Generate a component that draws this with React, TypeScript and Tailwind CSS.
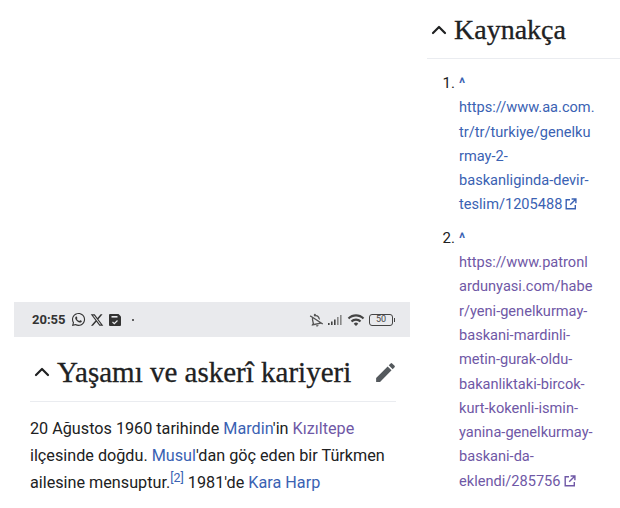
import { ChevronUp } from "lucide-react";
import { FaWhatsapp } from "react-icons/fa";
import { FaXTwitter } from "react-icons/fa6";
import { MdEdit, MdOutlineNotificationsOff, MdWifi } from "react-icons/md";

const firstLink = ["https://www.aa.com.", "tr/tr/turkiye/genelku", "rmay-2-", "baskanliginda-devir-"];
const secondLink = [
  "https://www.patronl",
  "ardunyasi.com/habe",
  "r/yeni-genelkurmay-",
  "baskani-mardinli-",
  "metin-gurak-oldu-",
  "bakanliktaki-bircok-",
  "kurt-kokenli-ismin-",
  "yanina-genelkurmay-",
  "baskani-da-",
];

function ExternalIcon() {
  return (
    <svg viewBox="0 0 12 12" className="ml-[3px] inline-block h-3 w-3 align-[-1px]" fill="none" stroke="currentColor" strokeWidth="1.4">
      <path d="M5 1.7H1.2v9.1h9.1V7" />
      <path d="M6.6 1h4.3v4.3M10.7 1.3 5.2 6.8" />
    </svg>
  );
}

function SectionHeading({ title, textClass }: { title: string; textClass: string }) {
  return (
    <div className="flex items-center">
      <ChevronUp className="h-[24px] w-[24px] shrink-0 text-[#202122]" strokeWidth={2.2} />
      <h2 className={`whitespace-nowrap font-['Liberation_Serif',serif] text-[#202122] [-webkit-text-stroke:0.3px_#202122] ${textClass}`}>{title}</h2>
    </div>
  );
}

function RefItem({ n, lines, last, color }: { n: number; lines: string[]; last: string; color: string }) {
  return (
    <li className="flex">
      <span className="w-[30px] pr-[2px] text-right text-[15px] leading-[24.3px] text-[#202122]">{n}.</span>
      <div className="ml-[2px] text-[14.6px] leading-[24.3px]" style={{ color }}>
        <span className="block text-[14px] font-bold leading-[24.3px] text-[#3a62b3]">^</span>
        {lines.map((line) => (
          <span key={line} className="block whitespace-nowrap">
            {line}
          </span>
        ))}
        <span className="block whitespace-nowrap">
          {last}
          <ExternalIcon />
        </span>
      </div>
    </li>
  );
}

export default function App() {
  return (
    <div className="flex h-[508px] w-[620px] overflow-hidden bg-white font-['Roboto',sans-serif]">
      <div className="ml-[14px] w-[396px] shrink-0 pt-[302px]">
        <div className="flex h-[35px] items-center justify-between bg-[#e9eaed] pl-[18px] pr-[15px] text-[#333]">
          <div className="flex items-center">
            <span className="text-[13px] font-bold">20:55</span>
            <FaWhatsapp className="ml-[5px] h-[15px] w-[15px]" />
            <FaXTwitter className="ml-[4px] h-[14px] w-[14px]" />
            <svg viewBox="0 0 14 14" className="ml-[4px] h-[14px] w-[14px]">
              <path fill="#333" d="M1.5 1h9L13 3.5v8.5a1 1 0 0 1-1 1H2a1 1 0 0 1-1-1V1.5z" />
              <path fill="#e9eaed" d="M3.5 3h6v1.6h-6z" />
              <path fill="none" stroke="#e9eaed" strokeWidth="1.2" d="m4.5 9 1.8 1.7 3.2-3.2" />
            </svg>
            <span className="ml-[10px] h-[2px] w-[2px] rounded-full bg-[#333]" />
          </div>
          <div className="flex items-center">
            <MdOutlineNotificationsOff className="h-[16px] w-[16px] -rotate-12 text-[#555]" />
            <svg viewBox="0 0 16 12" className="ml-[3px] h-[12px] w-[16px]">
              <path fill="#444" d="M1 9h1.6v2H1zM4 7.5h1.6V11H4zM7 5.5h1.6V11H7z" />
              <path fill="#888" d="M10 3h1.6v8H10zM13 1h1.6v10H13z" />
            </svg>
            <MdWifi className="ml-[4px] h-[18px] w-[18px] text-[#444]" />
            <div className="ml-[4px] flex items-center">
              <span className="flex h-[12px] w-[24px] items-center justify-center rounded-[3px] border border-[#444] text-[9px] leading-none text-[#444]">
                50
              </span>
              <span className="ml-[1px] h-[4px] w-[1px] bg-[#444]" />
            </div>
          </div>
        </div>
        <div className="pl-[16px] pr-[14px]">
          <div className="flex h-[65px] items-center justify-between border-b border-[#eaecf0] pt-[6px]">
            <SectionHeading title="Yaşamı ve askerî kariyeri" textClass="ml-[3px] text-[29px] leading-none" />
            <MdEdit className="-mr-[2px] h-[25px] w-[25px] text-[#54595d]" />
          </div>
          <p className="mt-[13px] text-[16.2px] leading-[27px] text-[#202122]">
            20 Ağustos 1960 tarihinde <span className="text-[#3a62b3]">Mardin</span>'in{" "}
            <span className="text-[#6f58a6]">Kızıltepe</span>
            <br />
            ilçesinde doğdu. <span className="text-[#3a62b3]">Musul</span>'dan göç eden bir Türkmen
            <br />
            ailesine mensuptur.
            <sup className="text-[12.5px] leading-none text-[#3a62b3]">[2]</sup> 1981'de{" "}
            <span className="text-[#3a62b3]">Kara Harp</span>
          </p>
        </div>
      </div>
      <div className="ml-[17px] w-[193px] shrink-0">
        <div className="flex h-[59px] items-center border-b border-[#eaecf0] pt-[1px]">
          <SectionHeading title="Kaynakça" textClass="ml-[3px] text-[28px] leading-none" />
        </div>
        <ol className="mt-[12px] flex flex-col gap-[9px]">
          <RefItem n={1} lines={firstLink} last="teslim/1205488" color="#3a62b3" />
          <RefItem n={2} lines={secondLink} last="eklendi/285756" color="#6f58a6" />
        </ol>
      </div>
    </div>
  );
}
